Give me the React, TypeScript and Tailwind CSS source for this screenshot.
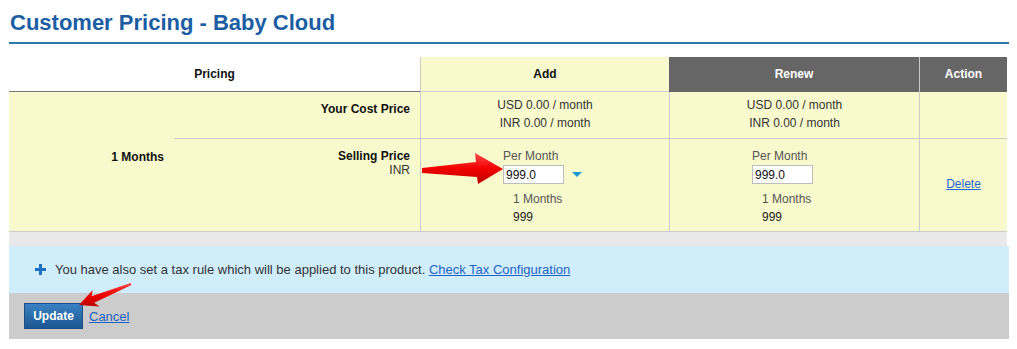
import React from "react";

const Y = "bg-[#f8f9cd]";

function PriceEdit({ withCaret }: { withCaret?: boolean }) {
  return (
    <div className="pl-[82px] pt-[10px]">
      <div className="leading-[14px] text-[#555]">Per Month</div>
      <div className="mt-[2px] flex items-center gap-[8px]">
        <input
          readOnly
          value="999.0"
          className="h-[19px] w-[61px] border border-[#bdbdbd] bg-white px-[2px] font-['Liberation_Sans',Arial,sans-serif] text-[12px] text-[#111] outline-none"
        />
        {withCaret && (
          <svg width="10" height="6" viewBox="0 0 10 6">
            <path d="M0 0 L10 0 L5 5 Z" fill="#1b98d8" />
          </svg>
        )}
      </div>
      <div className="mt-[6px] pl-[10px] leading-[18px]">
        <div className="text-[#555]">1 Months</div>
        <div className="text-[#222]">999</div>
      </div>
    </div>
  );
}

export default function App() {
  return (
    <div className="relative min-h-[349px] bg-white pl-[9px] pt-[10px] font-['Liberation_Sans',Arial,sans-serif]">
      <h1 className="w-[1000px] border-b-2 border-[#2b78aa] pb-[7px] pl-px text-[22px] font-bold leading-[25px] text-[#1b5ea3]">
        Customer Pricing - Baby Cloud
      </h1>

      <div className="mt-[13px] grid w-[998px] grid-cols-[165px_246px_249px_250px_88px] grid-rows-[35px_47px_93px] text-[12px]">
        {/* header */}
        <div className="col-span-2 flex items-center justify-center border-b border-[#777] bg-white pb-px font-bold text-[#111]">
          Pricing
        </div>
        <div className={`flex items-center justify-center border-b border-l border-[#cccccc] ${Y} pb-px font-bold text-[#111]`}>
          Add
        </div>
        <div className="flex items-center justify-center bg-[#666666] pb-px font-bold text-white">
          Renew
        </div>
        <div className="flex items-center justify-center border-l border-[#cccccc] bg-[#666666] pb-px font-bold text-white">
          Action
        </div>

        {/* left merged cell */}
        <div className={`row-span-2 border-b border-[#cccccc] ${Y} pr-[10px] pt-[58px] text-right font-bold leading-[14px] text-[#111]`}>
          1 Months
        </div>

        {/* row 1 */}
        <div className={`border-b border-[#cccccc] ${Y} pr-[10px] pt-[10px] text-right font-bold leading-[14px] text-[#111]`}>
          Your Cost Price
        </div>
        <div className={`border-b border-l border-[#cccccc] ${Y} pt-[4px] text-center leading-[18px] text-[#333]`}>
          <div>USD 0.00 / month</div>
          <div>INR 0.00 / month</div>
        </div>
        <div className={`border-b border-l border-[#cccccc] ${Y} pt-[4px] text-center leading-[18px] text-[#333]`}>
          <div>USD 0.00 / month</div>
          <div>INR 0.00 / month</div>
        </div>
        <div className={`border-b border-l border-[#cccccc] ${Y}`} />

        {/* row 2 */}
        <div className={`border-b border-[#cccccc] ${Y} pr-[10px] pt-[10px] text-right leading-[14px] text-[#111]`}>
          <div className="font-bold">Selling Price</div>
          <div className="text-[#333]">INR</div>
        </div>
        <div className={`border-b border-l border-[#cccccc] ${Y}`}>
          <PriceEdit withCaret />
        </div>
        <div className={`border-b border-l border-[#cccccc] ${Y}`}>
          <PriceEdit />
        </div>
        <div className={`flex items-center justify-center border-b border-l border-[#cccccc] ${Y} pb-[2px]`}>
          <a href="#" className="text-[#2266cc] underline">
            Delete
          </a>
        </div>
      </div>

      <div className="h-[14px] w-[998px] bg-[#e8e9e8]" />

      <div className="flex h-[47px] w-[1000px] items-center gap-[9px] bg-[#d0edfc] pl-[26px] text-[13px] text-[#333]">
        <svg width="11" height="11" viewBox="0 0 11 11">
          <rect x="4" y="0" width="3" height="11" fill="#1d6fc2" />
          <rect x="0" y="4" width="11" height="3" fill="#1d6fc2" />
        </svg>
        <span>
          You have also set a tax rule which will be applied to this product.{" "}
          <a href="#" className="text-[#1f62c4] underline">
            Check Tax Configuration
          </a>
        </span>
      </div>

      <div className="flex h-[46px] w-[1000px] items-start gap-[6px] bg-[#cbcccb] pl-[15px] pt-[10px]">
        <button className="h-[26px] w-[59px] border border-[#1d4f85] bg-gradient-to-b from-[#3b82c4] to-[#1b5691] text-[12px] font-bold text-white">
          Update
        </button>
        <a href="#" className="mt-[4px] text-[13px] text-[#1f62c4] underline">
          Cancel
        </a>
      </div>

      <svg
        className="pointer-events-none absolute left-0 top-0"
        width="1017"
        height="349"
        viewBox="0 0 1017 349"
      >
        <defs>
          <linearGradient id="ar" x1="0" y1="0" x2="0" y2="1">
            <stop offset="0" stopColor="#ff4a4a" />
            <stop offset="0.5" stopColor="#f20000" />
            <stop offset="1" stopColor="#b80000" />
          </linearGradient>
        </defs>
        <polygon
          points="503,169 475,153 476,162 422,168 422,173 477,177 478,184"
          fill="url(#ar)"
        />
        <polygon
          points="79,305 92.7,289.9 91.6,296.2 130.6,282.9 131.5,285.1 94.2,302.7 99.5,306.6"
          fill="url(#ar)"
        />
      </svg>
    </div>
  );
}
